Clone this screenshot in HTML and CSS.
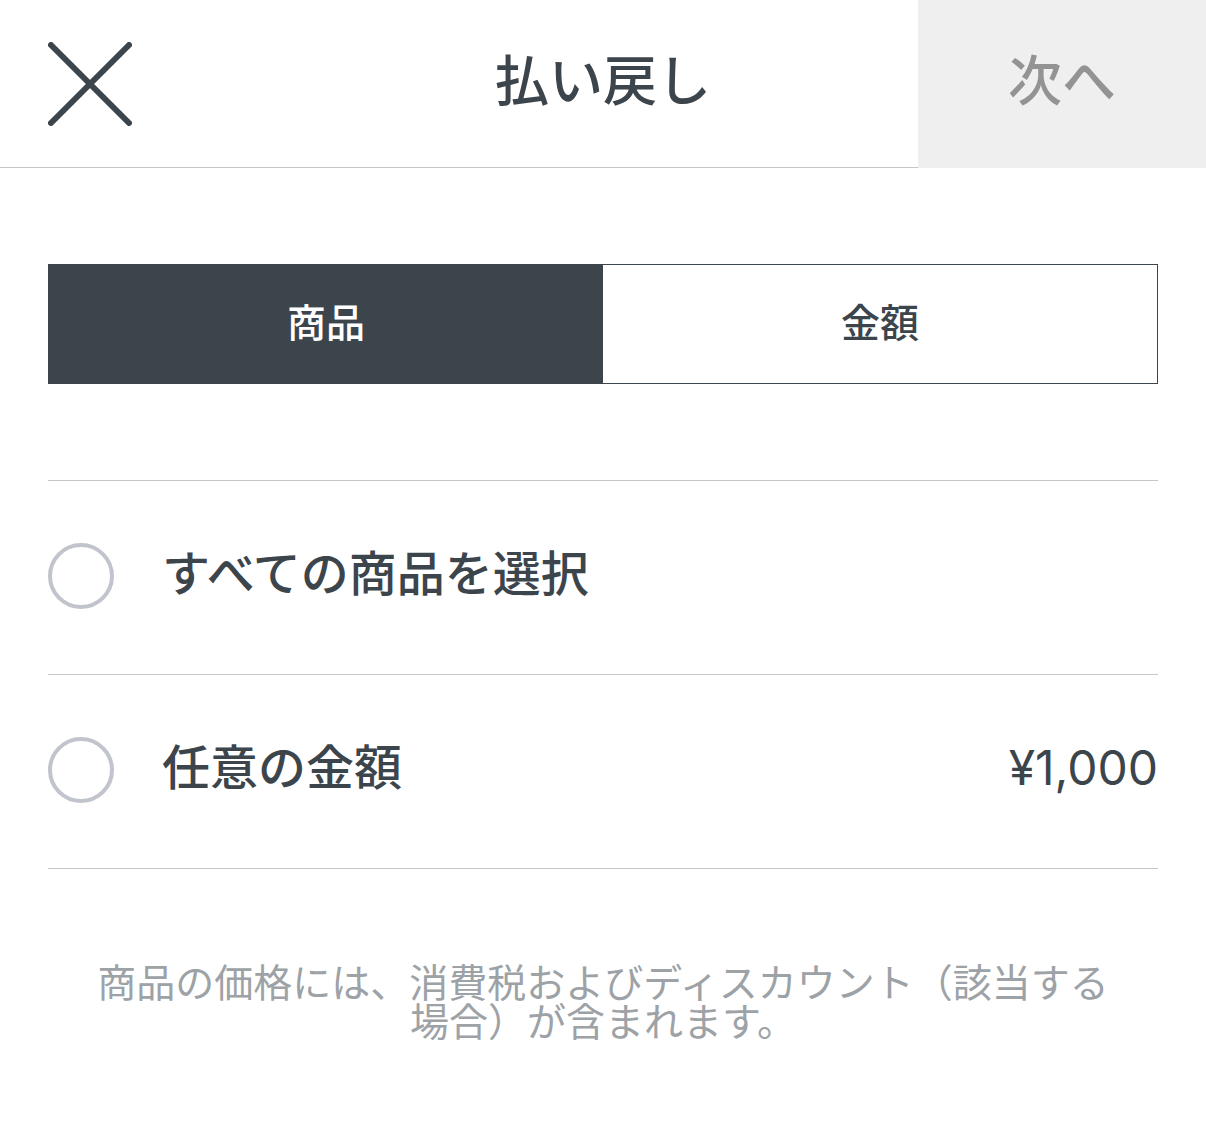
FILE: index.html
```html
<!DOCTYPE html>
<html lang="ja">
<head>
  <meta charset="UTF-8">
  <meta name="viewport" content="width=device-width, initial-scale=1.0">
  <title>払い戻し</title>
  <link rel="stylesheet" href="styles.css">
</head>
<body>
  <form class="refund">
    <header class="header">
      <button type="button" class="close" aria-label="閉じる">
        <svg viewBox="0 0 84 84" width="84" height="84"><path d="M3 3L81 81M81 3L3 81"/></svg>
      </button>
      <h1>払い戻し</h1>
      <button type="submit" class="next" disabled>次へ</button>
    </header>

    <main class="content">
      <div class="tabs" role="tablist">
        <button type="button" class="tab selected" role="tab" aria-selected="true">商品</button>
        <button type="button" class="tab" role="tab" aria-selected="false">金額</button>
      </div>

      <div class="items">
        <label class="item">
          <input type="checkbox" name="all">
          <span class="name">すべての商品を選択</span>
        </label>
        <label class="item">
          <input type="checkbox" name="custom">
          <span class="name">任意の金額</span>
          <span class="price">¥1,000</span>
        </label>
      </div>

      <p class="note">商品の価格には、消費税およびディスカウント（該当する場合）が含まれます。</p>
    </main>
  </form>

  <script>
    const tabs = document.querySelectorAll('.tab');
    tabs.forEach(tab => {
      tab.addEventListener('click', () => {
        tabs.forEach(t => {
          t.classList.toggle('selected', t === tab);
          t.setAttribute('aria-selected', t === tab);
        });
      });
    });

    const boxes = document.querySelectorAll('.item input');
    boxes.forEach(box => {
      box.addEventListener('change', () => {
        if (box.name === 'all') boxes.forEach(b => b.checked = box.checked);
        document.querySelector('.next').disabled = ![...boxes].some(b => b.checked);
      });
    });
  </script>
</body>
</html>
```

FILE: styles.css
```css
* { box-sizing: border-box; }
body {
  margin: 0;
  background: #fff;
  color: #3d454c;
  font-family: Inter, "Noto Sans CJK JP", sans-serif;
}
button { border: 0; font-family: inherit; color: inherit; cursor: pointer; }

.header {
  display: grid;
  grid-template-columns: 288px 1fr 288px;
  height: 168px;
  border-bottom: 1px solid #c4c6c9;
}
.close {
  display: flex;
  align-items: center;
  padding: 0 48px;
  background: none;
}
.close svg {
  fill: none;
  stroke: #3d454c;
  stroke-width: 6;
  stroke-linecap: round;
}
.header h1 {
  margin: 0;
  font-size: 54px;
  font-weight: 500;
  line-height: 164px;
  text-align: center;
}
.next {
  height: 168px;
  padding: 0 0 14px;
  background: #3d454c;
  color: #fff;
  font-size: 54px;
  font-weight: 500;
}
.next:disabled { background: #efefef; color: #939393; cursor: default; }

.content { padding: 96px 48px; }
.tabs {
  display: flex;
  height: 120px;
  border: 1px solid #3d454c;
}
.tab {
  flex: 1;
  padding: 0 0 8px;
  background: #fff;
  font-size: 39px;
  font-weight: 500;
}
.tab.selected { background: #3d454c; color: #fff; }

.items { margin-top: 96px; border-top: 1px solid #c4c6c9; }
.item {
  display: flex;
  align-items: center;
  height: 194px;
  padding-bottom: 3px;
  border-bottom: 1px solid #c4c6c9;
  font-size: 48px;
  font-weight: 500;
  line-height: 72px;
  cursor: pointer;
}
.item input {
  appearance: none;
  width: 66px;
  height: 66px;
  margin: 0 48px 0 0;
  border: 4px solid #c1c4cc;
  border-radius: 50%;
}
.item input:checked { border-color: #3d454c; background: #3d454c; }
.name { flex: 1; padding-bottom: 4px; }
.price { padding-bottom: 4px; font-weight: 400; }

.note {
  margin: 94px 48px 0;
  color: #9da2a6;
  font-size: 39px;
  line-height: 39px;
  text-align: center;
}
```
